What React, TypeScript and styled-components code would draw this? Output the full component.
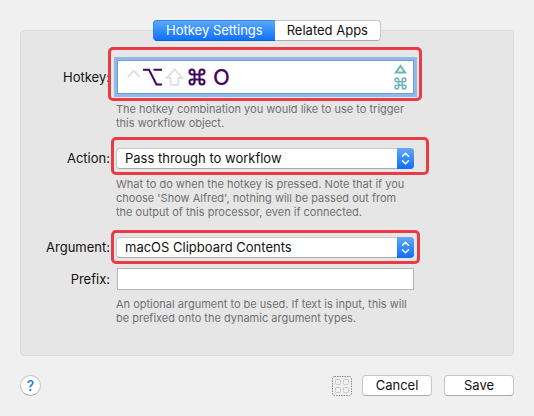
import React from "react";
import styled, { createGlobalStyle, css } from "styled-components";

const GlobalStyle = createGlobalStyle`
  *, *::before, *::after { box-sizing: border-box; }
  body {
    margin: 0;
    background: #f0f0f0;
    color: #111;
    font-family: Inter, Roboto, "Liberation Sans", sans-serif;
    font-size: 13px;
    line-height: 16px;
  }
  button, input, select { font: inherit; color: inherit; }
`;

const Sheet = styled.main`
  display: flex;
  flex-direction: column;
  padding: 20px 20px 19px;
`;

const Tabs = styled.div`
  display: flex;
  align-self: center;
  position: relative;
  z-index: 1;
  margin-bottom: -11px;
`;

const raised = css`
  border: 1px solid #c6c6c6;
  border-bottom-color: #ababab;
  background: #fff;
`;

const Tab = styled.button<{ $active?: boolean }>`
  height: 21px;
  padding: 0 12px;
  white-space: nowrap;
  line-height: 19px;
  ${raised}
  border-left: 0;
  border-radius: 0 4px 4px 0;
  ${({ $active }) =>
    $active &&
    css`
      border: 1px solid #2c83f0;
      border-bottom-color: #0a5fd8;
      border-right: 0;
      border-radius: 4px 0 0 4px;
      background: linear-gradient(#5aa9fb, #0f70fd);
      color: #fff;
    `}
`;

const Panel = styled.section`
  display: grid;
  grid-template-columns: 89px minmax(0, 1fr);
  column-gap: 6px;
  padding: 29px 99px 30px 0;
  border: 1px solid #dcdcdc;
  border-radius: 4px;
  background: #e6e6e6;
`;

const Label = styled.label<{ $height: number }>`
  text-align: right;
  white-space: nowrap;
  line-height: ${({ $height }) => $height}px;
`;

const Field = styled.div<{ $last?: boolean }>`
  position: relative;
  margin-bottom: ${({ $last }) => ($last ? 10 : 0)}px;
`;

const Help = styled.p`
  grid-column: 2;
  margin: 8px 0 18px;
  color: #707070;
  font-size: 11px;
  line-height: 14px;
  white-space: pre;

  &:last-child { margin: 7px 0 0; }
`;

const marks = {
  hotkey: "-13px -8px -7px -8px",
  action: "-11px -15px -6px -5px",
  argument: "-7px -6px -6px -5px",
};

const Mark = styled.span<{ $inset: string }>`
  position: absolute;
  inset: ${({ $inset }) => $inset};
  border: 3px solid #e93b46;
  border-radius: 5px;
  pointer-events: none;
`;

const HotkeyBox = styled.div`
  display: flex;
  align-items: center;
  height: 34px;
  padding: 0 6px 0 9px;
  margin-left: 1px;
  background: #fff;
  border: 1px solid #6c9fd8;
  box-shadow: 0 0 0 3px #92b8e5;
`;

const HotkeyInput = styled.input`
  flex: 1;
  min-width: 0;
  height: 30px;
  padding: 0;
  margin-left: 6px;
  border: 0;
  outline: 0;
  background: none;
  color: #43065f;
  font-size: 22px;
  font-weight: 500;
`;

const Select = styled.select`
  appearance: none;
  display: block;
  width: 100%;
  height: 21px;
  padding: 0 24px 0 8px;
  ${raised}
  border-radius: 4px;
  line-height: 19px;
`;

const Stepper = styled.span`
  position: absolute;
  top: 0;
  right: 0;
  display: grid;
  place-items: center;
  width: 17px;
  height: 21px;
  border-radius: 0 4px 4px 0;
  background: linear-gradient(#62a9f8, #0d6efc);
  pointer-events: none;
`;

const TextInput = styled.input`
  display: block;
  width: calc(100% - 1px);
  height: 22px;
  margin-left: 1px;
  padding: 0 4px;
  border: 1px solid #b6b6b6;
  border-radius: 0;
  background: #fff;
`;

const Footer = styled.footer`
  display: flex;
  align-items: center;
  margin-top: 19px;
`;

const HelpButton = styled.button`
  width: 21px;
  height: 21px;
  padding: 0;
  margin-right: auto;
  ${raised}
  border-radius: 50%;
  color: #1b74e8;
  font-size: 14px;
  font-weight: 500;
  line-height: 19px;
`;

const IconButton = styled.button`
  display: flex;
  padding: 0;
  margin-right: 10px;
  border: 0;
  background: none;
`;

const PushButton = styled.button`
  width: 70px;
  height: 21px;
  padding: 0;
  ${raised}
  border-radius: 4px;
  line-height: 19px;

  & + & { margin-left: 12px; }
`;

const CMD =
  "M6.5 6.5V4A2.5 2.5 0 1 0 4 6.5H14A2.5 2.5 0 1 0 11.5 4V14A2.5 2.5 0 1 0 14 11.5H4A2.5 2.5 0 1 0 6.5 14Z";

const Command = ({ size, color, weight }: { size: number; color: string; weight: number }) => (
  <svg width={size} height={size} viewBox="0 0 18 18" fill="none" stroke={color} strokeWidth={weight} aria-hidden="true">
    <path d={CMD} />
  </svg>
);

const Modifiers = () => (
  <svg width="80" height="20" viewBox="0 0 80 20" fill="none" aria-hidden="true">
    <path d="M.8 9.8 6.8 3.8 12.8 9.8" stroke="#dedede" strokeWidth="1.8" />
    <path d="M16 2.8H22L29.5 17.5H35M26.5 2.8H35" stroke="#43065f" strokeWidth="2" />
    <path d="M47.5 2.4 55.3 10.8H51.3V17.8H43.7V10.8H39.7Z" stroke="#dedede" strokeWidth="1.7" />
    <g transform="translate(61 1)">
      <path d={CMD} stroke="#43065f" strokeWidth="2.1" />
    </g>
  </svg>
);

const Badge = styled.span`
  display: flex;
  flex-direction: column;
  align-items: center;
  gap: 3px;
`;

const Arrows = () => (
  <Stepper aria-hidden="true">
    <svg width="9" height="13" viewBox="0 0 9 13" fill="none" stroke="#fff" strokeWidth="1.5" strokeLinecap="round" strokeLinejoin="round">
      <path d="M1.5 4.3 4.5 1.3 7.5 4.3M1.5 8.7 4.5 11.7 7.5 8.7" />
    </svg>
  </Stepper>
);

const cells = [
  [3.5, 3.5],
  [11.5, 3.5],
  [3.5, 11.5],
  [11.5, 11.5],
];

export default function App() {
  return (
    <>
      <GlobalStyle />
      <Sheet>
        <Tabs role="tablist">
          <Tab role="tab" aria-selected="true" $active>Hotkey Settings</Tab>
          <Tab role="tab" aria-selected="false">Related Apps</Tab>
        </Tabs>
        <Panel>
          <Label htmlFor="hotkey" $height={34}>Hotkey:</Label>
          <Field>
            <HotkeyBox>
              <Modifiers />
              <HotkeyInput id="hotkey" defaultValue="O" />
              <Badge>
                <svg width="13" height="10" viewBox="0 0 13 10" fill="none" stroke="#6db5b6" strokeWidth="2" aria-hidden="true">
                  <path d="M6.5 2 11 8.5H2Z" />
                </svg>
                <Command size={13} color="#6db5b6" weight={2.2} />
              </Badge>
            </HotkeyBox>
            <Mark $inset={marks.hotkey} />
          </Field>
          <Help>{"The hotkey combination you would like to use to trigger\nthis workflow object."}</Help>

          <Label htmlFor="action" $height={21}>Action:</Label>
          <Field>
            <Select id="action">
              <option>Pass through to workflow</option>
            </Select>
            <Arrows />
            <Mark $inset={marks.action} />
          </Field>
          <Help>{"What to do when the hotkey is pressed. Note that if you\nchoose 'Show Alfred', nothing will be passed out from\nthe output of this processor, even if connected."}</Help>

          <Label htmlFor="argument" $height={21}>Argument:</Label>
          <Field $last>
            <Select id="argument">
              <option>macOS Clipboard Contents</option>
            </Select>
            <Arrows />
            <Mark $inset={marks.argument} />
          </Field>

          <Label htmlFor="prefix" $height={22}>Prefix:</Label>
          <Field>
            <TextInput id="prefix" type="text" />
          </Field>
          <Help>{"An optional argument to be used. If text is input, this will\nbe prefixed onto the dynamic argument types."}</Help>
        </Panel>
        <Footer>
          <HelpButton aria-label="Help">?</HelpButton>
          <IconButton aria-label="Layout">
            <svg width="20" height="20" viewBox="0 0 20 20" fill="none" aria-hidden="true">
              <rect x=".5" y=".5" width="19" height="19" rx="2" stroke="#8a8a8a" strokeDasharray="1.5 1" />
              {cells.map(([x, y]) => (
                <rect key={`${x}-${y}`} x={x} y={y} width="5" height="5" rx="1" stroke="#c0c0c0" strokeDasharray="3 .6" />
              ))}
            </svg>
          </IconButton>
          <PushButton>Cancel</PushButton>
          <PushButton>Save</PushButton>
        </Footer>
      </Sheet>
    </>
  );
}
